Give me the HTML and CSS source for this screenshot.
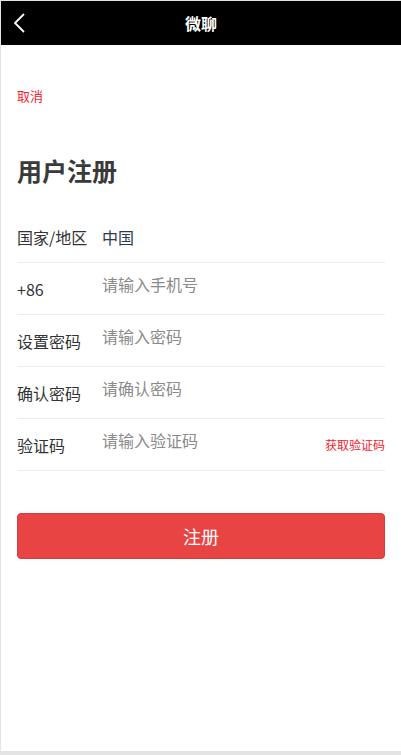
FILE: index.html
```
<!DOCTYPE html>
<html lang="zh-CN">
<head>
    <meta charset="UTF-8">
    <meta name="viewport" content="width=device-width, initial-scale=1.0">
    <title>微聊</title>
    <link rel="stylesheet" href="styles.css">
</head>
<body>
    <div class="page">
        <div class="topbar">
            <a class="back" href="#">
                <svg width="14" height="22" viewBox="0 0 14 22">
                    <polyline points="11,2 2,11 11,20" fill="none" stroke="#fff" stroke-width="1.8"/>
                </svg>
            </a>
            <span class="topbar-title">微聊</span>
        </div>

        <div class="content">
            <a class="cancel" href="#">取消</a>
            <h1 class="title">用户注册</h1>

            <form class="reg-form">
                <div class="row">
                    <label class="row-label">国家/地区</label>
                    <span class="row-value">中国</span>
                </div>
                <div class="row">
                    <label class="row-label" for="phone">+86</label>
                    <input class="row-input" type="text" id="phone" placeholder="请输入手机号">
                </div>
                <div class="row">
                    <label class="row-label" for="pwd">设置密码</label>
                    <input class="row-input" type="password" id="pwd" placeholder="请输入密码">
                </div>
                <div class="row">
                    <label class="row-label" for="pwd2">确认密码</label>
                    <input class="row-input" type="password" id="pwd2" placeholder="请确认密码">
                </div>
                <div class="row">
                    <label class="row-label" for="code">验证码</label>
                    <input class="row-input" type="text" id="code" placeholder="请输入验证码">
                    <a class="get-code" href="#">获取验证码</a>
                </div>

                <button type="submit" class="submit-btn">注册</button>
            </form>
        </div>
    </div>
</body>
</html>
```

FILE: styles.css
```
* {
    box-sizing: border-box;
}

body {
    margin: 0;
    background: #e4e4e4;
    font-family: "Noto Sans CJK SC", "Noto Sans", sans-serif;
    color: #333;
}

.page {
    margin: 1px 0 0 1px;
    height: 750px;
    background: #fff;
}

.topbar {
    position: relative;
    height: 44px;
    background: #000;
    display: flex;
    align-items: center;
    justify-content: center;
}

.back {
    position: absolute;
    left: 12px;
    top: 11px;
    display: block;
    line-height: 0;
}

.topbar-title {
    color: #fff;
    font-size: 16px;
    font-weight: bold;
}

.content {
    padding: 0 16px 0 16px;
}

.cancel {
    display: block;
    margin-top: 43px;
    font-size: 13px;
    line-height: 16px;
    color: #f5222d;
    text-decoration: none;
}

.title {
    margin: 50px 0 0 0;
    font-size: 25px;
    line-height: 32px;
    font-weight: bold;
    color: #3a3a3a;
}

.reg-form {
    margin-top: 25px;
}

.row {
    display: flex;
    align-items: center;
    height: 52px;
    border-bottom: 1px solid #ececec;
}

.row-label {
    width: 85px;
    flex-shrink: 0;
    font-size: 16px;
    line-height: 20px;
    color: #333;
}

.row-value {
    font-size: 16px;
    line-height: 20px;
    color: #2d3a4b;
}

.row-input {
    flex: 1;
    min-width: 0;
    height: 22px;
    margin-bottom: 10px;
    padding: 0;
    border: none;
    outline: none;
    font-family: inherit;
    font-size: 16px;
    color: #333;
}

.row-input::placeholder {
    color: #8a8a8a;
}

.get-code {
    font-size: 12px;
    color: #f5222d;
    text-decoration: none;
    white-space: nowrap;
}

.submit-btn {
    display: block;
    width: 100%;
    height: 46px;
    margin-top: 42px;
    background: #e84443;
    border: 1px solid #d93b3a;
    border-radius: 4px;
    color: #fff;
    font-family: inherit;
    font-size: 18px;
    cursor: pointer;
}
```
